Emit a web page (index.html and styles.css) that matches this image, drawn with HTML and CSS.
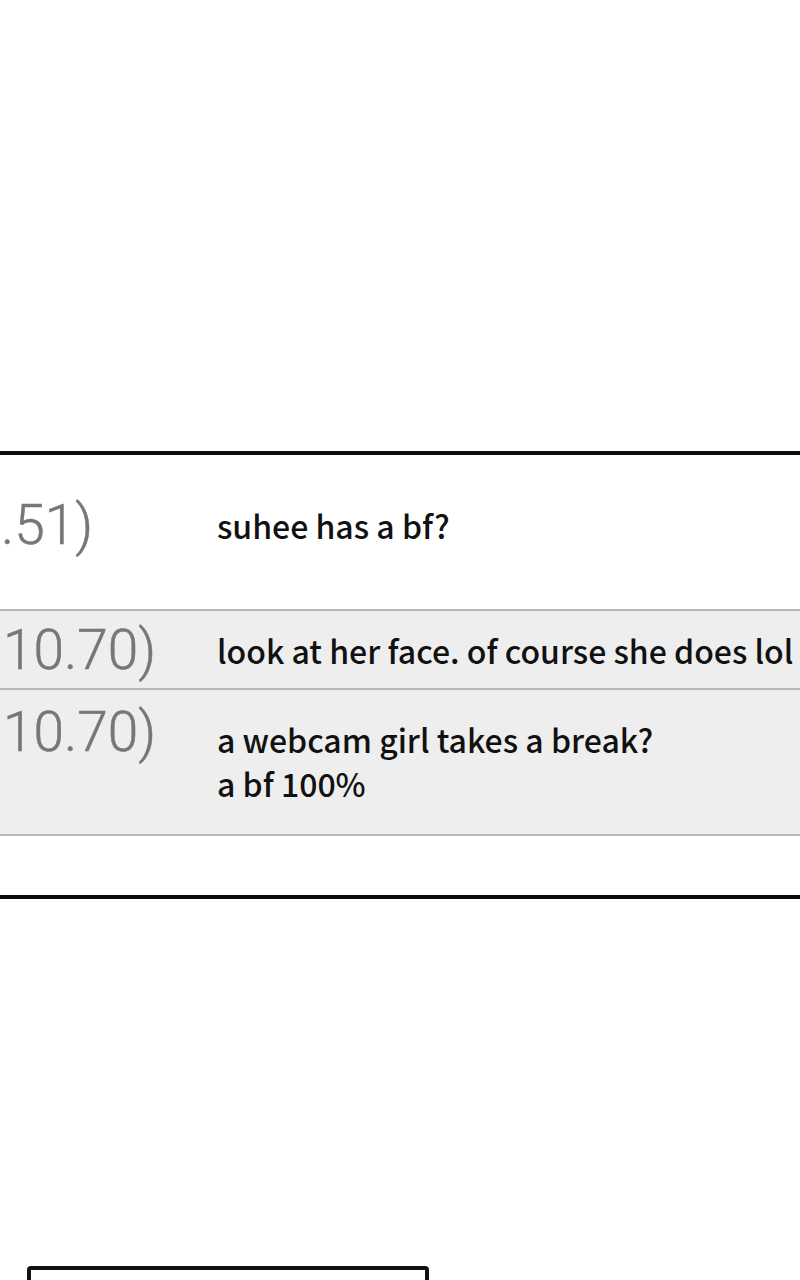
FILE: index.html
```html
<!DOCTYPE html>
<html lang="en">
<head>
    <meta charset="UTF-8">
    <title>comments</title>
    <link rel="stylesheet" href="styles.css">
</head>
<body>
    <div class="sky"></div>

    <div class="board">
        <div class="row first">
            <div class="stamp lead">.51)</div>
            <div class="msg">suhee has a bf?</div>
        </div>
        <div class="row grey short">
            <div class="stamp">10.70)</div>
            <div class="msg">look at her face. of course she does lol</div>
        </div>
        <div class="row grey tall">
            <div class="stamp">10.70)</div>
            <div class="msg">a webcam girl takes a break?<br>a bf 100%</div>
        </div>
        <div class="tail"></div>
    </div>

    <div class="gap"></div>
    <div class="nextbox"></div>
</body>
</html>
```

FILE: styles.css
```css
body {
    margin: 0;
    background: #fff;
    overflow: hidden;
}

.sky {
    height: 451px;
}

/* the comment panel */
.board {
    border-top: 4px solid #0c0c0c;
    border-bottom: 4px solid #0c0c0c;
}

.row {
    display: flex;
    border-bottom: 2px solid #b8b8b8;
    overflow: hidden;
}

.first {
    height: 154px;
    align-items: center;
}

.grey {
    background: #eeeeee;
}

.short {
    height: 77px;
    align-items: center;
}

.tall {
    height: 144px;
    align-items: flex-start;
}

.stamp {
    width: 214px;
    padding-left: 3px;
    flex-shrink: 0;
    font-family: Roboto, "Liberation Sans", sans-serif;
    font-weight: 300;
    font-size: 55px;
    color: #777;
    line-height: 60px;
    white-space: nowrap;
    -webkit-text-stroke: 0.5px #777;
}

.lead {
    padding-left: 1px;
    width: 216px;
    margin-bottom: 14px;
}

.msg {
    font-family: "Noto Sans CJK KR", "Noto Sans", sans-serif;
    font-weight: 500;
    font-size: 32px;
    line-height: 44px;
    color: #111;
    white-space: nowrap;
}

.first .msg {
    margin-bottom: 14px;
}

.tall .stamp {
    margin-top: 12px;
}

.tall .msg {
    margin-top: 27px;
}

.tail {
    height: 59px;
}

.gap {
    height: 367px;
}

.nextbox {
    margin-left: 27px;
    width: 394px;
    height: 40px;
    border: 4px solid #111;
    border-radius: 4px;
}
```
